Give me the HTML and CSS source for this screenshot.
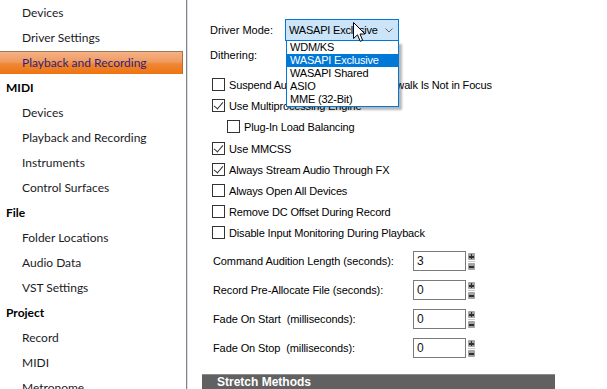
FILE: index.html
```html
<!DOCTYPE html>
<html>
<head>
<meta charset="utf-8">
<link rel="stylesheet" href="styles.css">
</head>
<body>
<div class="app">
  <nav class="sidebar">
    <div class="item sub">Devices</div>
    <div class="item sub">Driver Settings</div>
    <div class="item sub selected">Playback and Recording</div>
    <div class="item head">MIDI</div>
    <div class="item sub">Devices</div>
    <div class="item sub">Playback and Recording</div>
    <div class="item sub">Instruments</div>
    <div class="item sub">Control Surfaces</div>
    <div class="item head">File</div>
    <div class="item sub">Folder Locations</div>
    <div class="item sub">Audio Data</div>
    <div class="item sub">VST Settings</div>
    <div class="item head">Project</div>
    <div class="item sub">Record</div>
    <div class="item sub">MIDI</div>
    <div class="item sub">Metronome</div>
  </nav>
  <main class="main">
    <div class="field-row">
      <span class="field-label">Driver Mode:</span>
      <div class="combo">
        <span class="combo-text">WASAPI Exclusive</span>
        <svg class="chev" width="8" height="5" viewBox="0 0 8 5"><path d="M0.5 0.5 L4 4 L7.5 0.5" fill="none" stroke="#606060" stroke-width="1"/></svg>
        <ul class="droplist">
          <li>WDM/KS</li>
          <li class="active">WASAPI Exclusive</li>
          <li>WASAPI Shared</li>
          <li>ASIO</li>
          <li>MME (32-Bit)</li>
        </ul>
      </div>
    </div>
    <div class="field-row dither">
      <span class="field-label">Dithering:</span>
    </div>
    <div class="checks">
      <label class="check"><span class="box"></span>Suspend Audio Engine When Cakewalk Is Not in Focus</label>
      <label class="check"><span class="box on"></span>Use Multiprocessing Engine</label>
      <label class="check indent"><span class="box"></span>Plug-In Load Balancing</label>
      <label class="check gap"><span class="box on"></span>Use MMCSS</label>
      <label class="check"><span class="box on"></span>Always Stream Audio Through FX</label>
      <label class="check"><span class="box"></span>Always Open All Devices</label>
      <label class="check"><span class="box"></span>Remove DC Offset During Record</label>
      <label class="check"><span class="box"></span>Disable Input Monitoring During Playback</label>
    </div>
    <div class="spins">
      <div class="spin-row"><span class="spin-label">Command Audition Length (seconds):</span><span class="num">3</span><span class="spinner"><i class="plus"></i><i class="minus"></i></span></div>
      <div class="spin-row"><span class="spin-label">Record Pre-Allocate File (seconds):</span><span class="num">0</span><span class="spinner"><i class="plus"></i><i class="minus"></i></span></div>
      <div class="spin-row"><span class="spin-label">Fade On Start  (milliseconds):</span><span class="num">0</span><span class="spinner"><i class="plus"></i><i class="minus"></i></span></div>
      <div class="spin-row"><span class="spin-label">Fade On Stop  (milliseconds):</span><span class="num">0</span><span class="spinner"><i class="plus"></i><i class="minus"></i></span></div>
    </div>
    <div class="section-bar">Stretch Methods</div>
  </main>
</div>
<svg class="cursor" width="13" height="21" viewBox="0 0 13 21"><path d="M0.5 0.5 L0.5 16.5 L4.5 12.8 L7.2 19.3 L9.6 18.3 L7 12 L12 12 Z" fill="#fff" stroke="#000" stroke-width="1" stroke-linejoin="miter"/></svg>
</body>
</html>
```
FILE: styles.css
```css
* { box-sizing: border-box; }
html, body { margin: 0; padding: 0; background: #fff; }
body { width: 607px; height: 389px; overflow: hidden; position: relative; }
.app { display: flex; height: 389px; }

.sidebar {
  width: 187px;
  flex: none;
  display: flex;
  flex-direction: column;
  border-right: 1px solid #7f848e;
  font-family: Lato, "Liberation Sans", sans-serif;
  font-size: 12px;
  color: #1b1b1f;
  padding-right: 3px;
}
.item { height: 23px; margin: 1px 0; line-height: 23px; white-space: nowrap; flex: none; }
.item.sub { padding-left: 22px; }
.item.head { padding-left: 6px; font-weight: bold; color: #000; }
.item.selected {
  color: #2e1f7c;
  background: linear-gradient(#f4b288 0%, #f19a5e 45%, #ef8634 55%, #ee7410 100%);
  border-top: 1px solid #9c7a58;
  border-right: 1px solid #a8743c;
  line-height: 22px;
}

.main {
  flex: 1;
  border-left: 1px solid #dedede;
  padding: 19px 0 0 22px;
  font-family: "Liberation Sans", Arial, sans-serif;
  font-size: 11px;
  color: #000;
}
.field-row { display: flex; align-items: center; height: 22px; }
.field-row.dither { margin-top: 3px; }
.field-label { width: 75px; flex: none; }
.combo {
  position: relative;
  width: 114px;
  height: 22px;
  border: 1px solid #0078d7;
  background: #cce4f7;
  display: flex;
  align-items: center;
  padding-left: 3px;
  font-size: 11px;
  letter-spacing: -0.2px;
  white-space: nowrap;
}
.combo-text { flex: 1; overflow: hidden; }
.chev { margin: 0 5px 0 4px; flex: none; }
.droplist {
  position: absolute;
  top: 21px;
  left: 0;
  width: 113px;
  margin: 0;
  padding: 0;
  list-style: none;
  background: #fff;
  border: 1px solid #0078d7;
  border-top: none;
  box-shadow: 3px 3px 2px rgba(0,0,0,0.28);
  font-size: 11px;
  z-index: 5;
}
.droplist li { height: 13px; line-height: 13px; padding-left: 3px; white-space: nowrap; }
.droplist li.active { background: #0078d7; color: #fff; }

.checks { margin-top: 8px; margin-left: 2px; display: flex; flex-direction: column; letter-spacing: -0.15px; }
.check { display: flex; align-items: center; height: 21px; white-space: nowrap; }
.check.indent { padding-left: 15px; }
.check.gap { margin-top: 1px; }
.box {
  width: 13px; height: 13px; flex: none;
  border: 1px solid #333;
  background: #fff;
  margin-right: 4px;
  position: relative;
}
.box.on::after {
  content: "";
  position: absolute;
  left: 3px; top: 0px;
  width: 4px; height: 8px;
  border-right: 1px solid #333;
  border-bottom: 1px solid #333;
  transform: rotate(40deg);
}

.spins { margin-top: 8px; margin-left: 3px; display: flex; flex-direction: column; gap: 9px; letter-spacing: -0.1px; }
.spin-row { display: flex; align-items: center; height: 20px; }
.spin-label { width: 200px; flex: none; white-space: pre; }
.num {
  width: 53px; height: 20px;
  border: 1px solid #7a7a7a;
  padding-left: 3px;
  line-height: 18px;
  font-size: 12px;
  color: #111;
}
.spinner { display: flex; flex-direction: column; margin-left: 2px; height: 17px; justify-content: space-between; position: relative; }
.spinner::before { content: ""; position: absolute; left: 0; top: 8px; width: 7px; height: 1px; background: #c8c8c8; }
.spinner i { display: block; width: 7px; height: 7px; background: #a3a3a3; position: relative; border-radius: 1px; }
.spinner i::before { content: ""; position: absolute; left: 1px; top: 3px; width: 5px; height: 2px; background: #2e2e2e; }
.spinner i.plus::after { content: ""; position: absolute; left: 3px; top: 1px; width: 1px; height: 5px; background: #2e2e2e; }

.section-bar {
  margin-top: 16px;
  margin-left: -8px;
  width: 353px;
  height: 18px;
  background: #616161;
  border-top: 1px solid #8c8c8c;
  color: #fff;
  font-weight: bold;
  font-size: 12px;
  padding-left: 15px;
  line-height: 15px;
}

.cursor { position: absolute; left: 353px; top: 22px; z-index: 10; }
```
